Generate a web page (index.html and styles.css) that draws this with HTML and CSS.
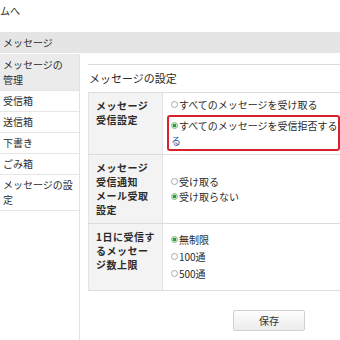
FILE: index.html
```html
<!DOCTYPE html>
<html lang="ja">
<head>
  <meta charset="UTF-8">
  <meta name="viewport" content="width=device-width, initial-scale=1.0">
  <title>メッセージの設定</title>
  <link rel="stylesheet" href="styles.css">
</head>
<body>
  <div class="frame">
    <div class="topnav">ムへ</div>

    <div class="band">メッセージ</div>

    <div class="page">
      <ul class="sidebar">
        <li class="active">メッセージの<br>管理</li>
        <li>受信箱</li>
        <li>送信箱</li>
        <li>下書き</li>
        <li>ごみ箱</li>
        <li>メッセージの設<br>定</li>
      </ul>

      <div class="main">
        <h2>メッセージの設定</h2>
        <table class="settings">
          <tr>
            <th>メッセージ<br>受信設定</th>
            <td class="snug">
              <div class="opt"><span class="radio"></span>すべてのメッセージを受け取る</div>
              <div class="opt highlight">
                <div class="nowrap"><span class="radio on"></span>すべてのメッセージを受信拒否する</div>
                <div class="stray">る</div>
              </div>
            </td>
          </tr>
          <tr>
            <th>メッセージ<br>受信通知<br>メール受取<br>設定</th>
            <td>
              <div class="opt tight"><span class="radio"></span>受け取る</div>
              <div class="opt tight"><span class="radio on"></span>受け取らない</div>
            </td>
          </tr>
          <tr>
            <th>1日に受信す<br>るメッセー<br>ジ数上限</th>
            <td class="roomy">
              <div class="opt"><span class="radio on"></span>無制限</div>
              <div class="opt"><span class="radio"></span>100通</div>
              <div class="opt"><span class="radio"></span>500通</div>
            </td>
          </tr>
        </table>
        <div class="actions">
          <button>保存</button>
        </div>
      </div>
    </div>
  </div>
</body>
</html>
```

FILE: styles.css
```css
html, body {
  margin: 0;
  overflow: hidden;
}
body {
  font-family: "Noto Sans CJK JP", "Noto Sans", sans-serif;
  font-size: 10px;
  color: #2b2b2b;
  background: #fff;
}
.frame {
  width: 340px;
  height: 340px;
  overflow: hidden;
}
.topnav {
  height: 32px;
  line-height: 22px;
}
.band {
  height: 21px;
  line-height: 21px;
  padding-left: 3px;
  background: #e5e5e5;
}
.page {
  display: flex;
  width: 480px;
  height: 300px;
  margin-top: 1px;
}
.sidebar {
  list-style: none;
  margin: 0;
  padding: 0;
  width: 79px;
  flex: none;
  border-right: 1px solid #e2e2e2;
}
.sidebar li {
  padding: 2px 3px 3px;
  line-height: 15px;
  border-bottom: 1px solid #e6e6e6;
}
.sidebar li.active {
  background: #ebebeb;
  padding: 3px 3px;
}
.main {
  flex: 1;
  padding: 10px 0 0 8px;
}
.main h2 {
  margin: 0;
  font-size: 11px;
  font-weight: normal;
  line-height: 16px;
  padding: 5px 1px 6px;
  border-top: 1px solid #dcdcdc;
}
.settings {
  width: 100%;
  border-collapse: collapse;
  border-top: 1px solid #dcdcdc;
}
.settings th {
  width: 58px;
  white-space: nowrap;
  text-align: left;
  vertical-align: top;
  background: #f3f3f3;
  font-weight: bold;
  letter-spacing: 0.5px;
  line-height: 14px;
  padding: 6px 7px;
  border-bottom: 1px solid #dcdcdc;
  border-left: 1px solid #e4e4e4;
  border-right: 1px solid #e4e4e4;
}
.settings td {
  vertical-align: middle;
  padding: 4px 4px;
  border-bottom: 1px solid #dcdcdc;
}
.settings td.snug {
  padding-top: 3px;
  padding-bottom: 3px;
}
.settings td.roomy {
  padding-top: 7px;
  padding-bottom: 8px;
}
.opt {
  line-height: 17px;
  padding-left: 4px;
}
.opt.tight {
  line-height: 15px;
}
.highlight {
  width: 165px;
  margin-top: 2px;
  padding: 1px 2px;
  line-height: 15px;
  border: 2px solid #d7212b;
  border-radius: 3px;
}
.nowrap {
  white-space: nowrap;
}
.stray {
  color: #2e5d9e;
}
.radio {
  display: inline-block;
  width: 5px;
  height: 5px;
  margin-right: 1px;
  border: 1px solid #a9a9a9;
  border-radius: 50%;
  background: #fff;
  vertical-align: 1px;
}
.radio.on {
  border-color: #8bbf8b;
  background: radial-gradient(circle, #2f9a3a 0 40%, #c6e8c6 55%);
}
.actions {
  padding: 19px 0 0 145px;
}
.actions button {
  width: 72px;
  height: 21px;
  padding: 0;
  font-family: "Noto Sans CJK JP", sans-serif;
  font-size: 10px;
  color: #333;
  background: linear-gradient(#fdfdfd, #ececec);
  border: 1px solid #d0d0d0;
  border-radius: 2px;
}
```
